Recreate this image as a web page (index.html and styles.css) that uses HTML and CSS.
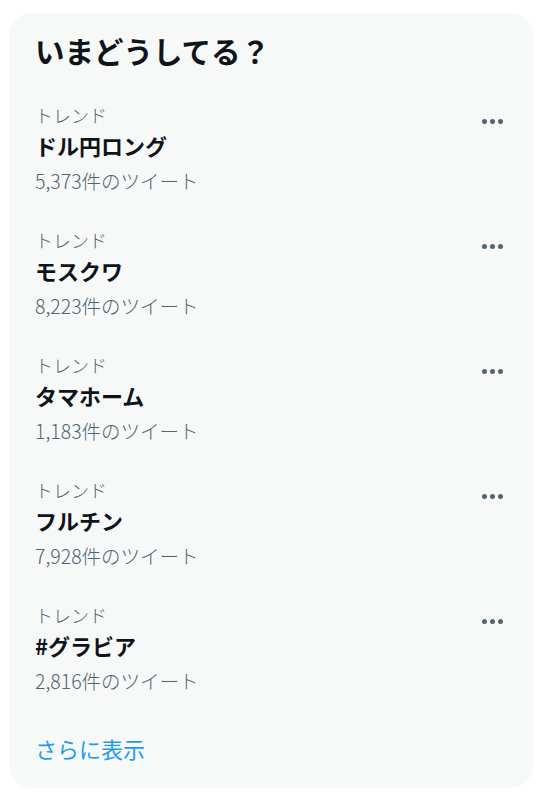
FILE: index.html
```html
<!DOCTYPE html>
<html lang="ja">
<head>
    <meta charset="UTF-8">
    <meta name="viewport" content="width=device-width, initial-scale=1.0">
    <title>いまどうしてる？</title>
    <link rel="stylesheet" href="styles.css">
</head>
<body>
    <section class="trends">
        <h2 class="trends-title">いまどうしてる？</h2>

        <div class="trend">
            <div class="trend-body">
                <div class="trend-label">トレンド</div>
                <div class="trend-name">ドル円ロング</div>
                <div class="trend-count">5,373件のツイート</div>
            </div>
            <span class="more"><i></i><i></i><i></i></span>
        </div>

        <div class="trend">
            <div class="trend-body">
                <div class="trend-label">トレンド</div>
                <div class="trend-name">モスクワ</div>
                <div class="trend-count">8,223件のツイート</div>
            </div>
            <span class="more"><i></i><i></i><i></i></span>
        </div>

        <div class="trend">
            <div class="trend-body">
                <div class="trend-label">トレンド</div>
                <div class="trend-name">タマホーム</div>
                <div class="trend-count">1,183件のツイート</div>
            </div>
            <span class="more"><i></i><i></i><i></i></span>
        </div>

        <div class="trend">
            <div class="trend-body">
                <div class="trend-label">トレンド</div>
                <div class="trend-name">フルチン</div>
                <div class="trend-count">7,928件のツイート</div>
            </div>
            <span class="more"><i></i><i></i><i></i></span>
        </div>

        <div class="trend">
            <div class="trend-body">
                <div class="trend-label">トレンド</div>
                <div class="trend-name">#グラビア</div>
                <div class="trend-count">2,816件のツイート</div>
            </div>
            <span class="more"><i></i><i></i><i></i></span>
        </div>

        <a href="#" class="show-more">さらに表示</a>
    </section>
</body>
</html>
```

FILE: styles.css
```css
:root {
    --card-background: #f7f9f9;
    --text-color: #0f1419;
    --muted-color: #536471;
    --link-color: #1d9bf0;
}

body {
    margin: 0;
    padding: 0;
    background: #fff;
    font-family: "Noto Sans CJK JP", "Noto Sans", sans-serif;
    color: var(--text-color);
}

.trends {
    width: 524px;
    margin: 13px 0 0 9px;
    padding: 0 30px 25px 26px;
    box-sizing: border-box;
    background: var(--card-background);
    border-radius: 22px;
}

.trends-title {
    margin: 0;
    padding: 17px 0 19px;
    font-size: 29.5px;
    line-height: 40px;
    font-weight: 700;
}

.trend {
    display: flex;
    justify-content: space-between;
    padding: 12px 0 13px;
}

.trend-label {
    font-size: 18px;
    line-height: 28px;
    font-weight: 300;
    color: var(--muted-color);
}

.trend-name {
    font-size: 22px;
    line-height: 32px;
    font-weight: 700;
}

.trend-count {
    font-size: 19.5px;
    line-height: 40px;
    font-weight: 300;
    color: var(--muted-color);
}

.more {
    display: flex;
    gap: 3px;
    margin-top: 18px;
    height: 5px;
}

.more i {
    width: 5px;
    height: 5px;
    border-radius: 50%;
    background: var(--muted-color);
}

.show-more {
    display: block;
    padding-top: 19px;
    font-size: 22px;
    line-height: 30px;
    color: var(--link-color);
    text-decoration: none;
}
```
